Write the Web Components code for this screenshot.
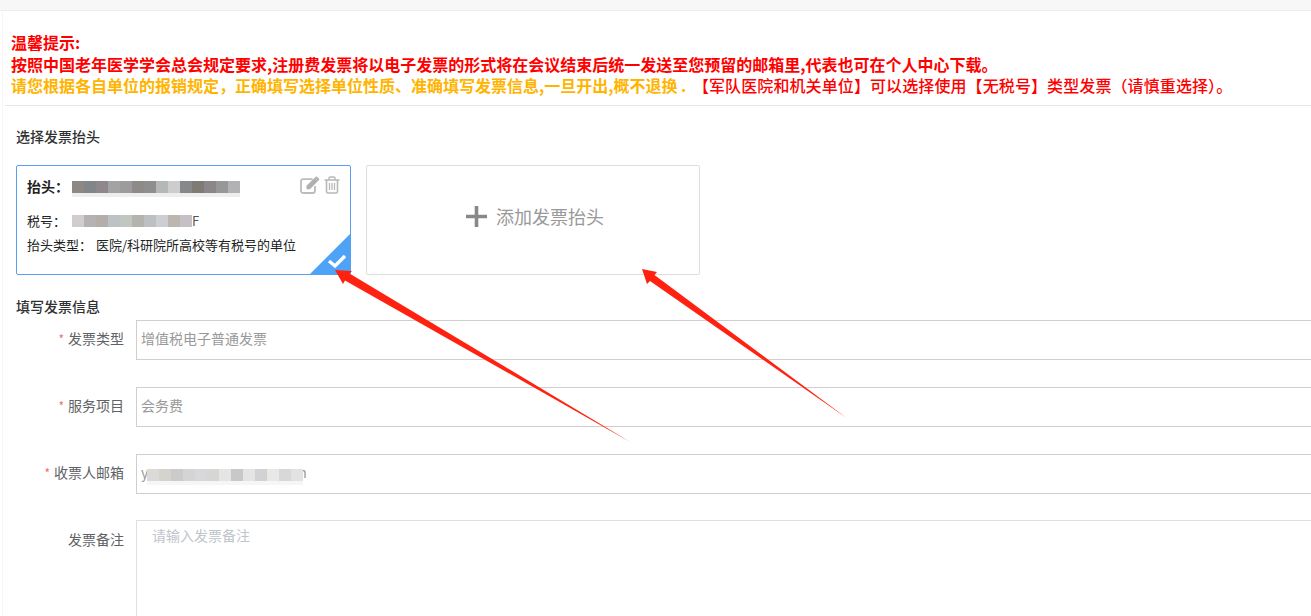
<!DOCTYPE html>
<html lang="zh">
<head>
<meta charset="utf-8">
<title>发票信息</title>
<style>
  html, body { margin: 0; padding: 0; height: 616px; overflow: hidden; background: #fff; }
  body { font-family: "Noto Sans CJK SC", "Liberation Sans", sans-serif; color: #333; position: relative; }
</style>
</head>
<body>
<top-bar></top-bar>
<page-body>
  <tip-notice>
    <div>温馨提示:</div>
    <div>按照中国老年医学学会总会规定要求,注册费发票将以电子发票的形式将在会议结束后统一发送至您预留的邮箱里,代表也可在个人中心下载。</div>
    <div><span class="warn">请您根据各自单位的报销规定&#xFF0C;正确填写选择单位性质、准确填写发票信息,一旦开出,概不退换 .</span> <span class="plain">【军队医院和机关单位】可以选择使用【无税号】类型发票&#xFF08;请慎重选择&#xFF09;。</span></div>
  </tip-notice>
  <section-title top="20" bottom="19">选择发票抬头</section-title>
  <card-row>
    <invoice-card></invoice-card>
    <add-card>添加发票抬头</add-card>
  </card-row>
  <section-title top="21" bottom="4">填写发票信息</section-title>
  <form-field label="发票类型" required>增值税电子普通发票</form-field>
  <form-field label="服务项目" required>会务费</form-field>
  <form-field label="收票人邮箱" required class="mail">
    <span style="display:inline-flex;align-items:center">y<blur-mosaic style="margin:10px 0 0 -1px;position:relative;z-index:1" colors="#dcdad8,#d5d3cd,#cbcbcb,#d4d4d6,#d8d8da,#d6d6d4,#e4e6e6,#c8c8ca,#e4e4e2,#d2d2d4,#e8e8e6,#d8d8d8,#e2e2e2" fade="#f6f6f6"></blur-mosaic><span style="margin-left:-5px">n</span></span>
  </form-field>
  <note-field label="发票备注" placeholder="请输入发票备注"></note-field>
</page-body>
<arrow-overlay></arrow-overlay>

<script>
class TopBar extends HTMLElement {
    constructor() {
        super();
        this.attachShadow({mode: "open"}).innerHTML = `
            <style>
                :host {
                    display: block;
                    height: 10px;
                    background: #f7f7f7;
                    border-bottom: 1px solid #eeeeee;
                }
            </style>`;
    }
}
customElements.define("top-bar", TopBar);

class PageBody extends HTMLElement {
    constructor() {
        super();
        this.attachShadow({mode: "open"}).innerHTML = `
            <style>
                :host {
                    display: block;
                    margin-left: 2px;
                    border-left: 1px solid #f6f6f6;
                }
            </style>
            <slot></slot>`;
    }
}
customElements.define("page-body", PageBody);

class TipNotice extends HTMLElement {
    constructor() {
        super();
        this.attachShadow({mode: "open"}).innerHTML = `
            <style>
                :host {
                    display: block;
                    margin-left: 2px;
                    padding: 21px 0 8px 6px;
                    border-bottom: 1px solid #e6e6e6;
                    font-size: 16px;
                    line-height: 21.5px;
                    font-weight: 700;
                    color: #ff0000;
                    white-space: nowrap;
                }
                ::slotted(div) { height: 21.5px; }
            </style>
            <slot></slot>`;
        const warn = this.querySelector(".warn");
        const plain = this.querySelector(".plain");
        if (warn) warn.style.color = "#ffb400";
        if (plain) {
            plain.style.fontWeight = "500";
            plain.style.marginLeft = "3px";
            plain.style.letterSpacing = "0.1px";
        }
    }
}
customElements.define("tip-notice", TipNotice);

class SectionTitle extends HTMLElement {
    constructor() {
        super();
        this.attachShadow({mode: "open"}).innerHTML = `
            <style>
                :host {
                    display: block;
                    margin-left: 13px;
                    font-size: 14px;
                    line-height: 20px;
                    font-weight: 500;
                    color: #303133;
                }
            </style>
            <slot></slot>`;
    }
    connectedCallback() {
        this.style.marginTop = this.getAttribute("top") + "px";
        this.style.marginBottom = this.getAttribute("bottom") + "px";
    }
}
customElements.define("section-title", SectionTitle);

class CardRow extends HTMLElement {
    constructor() {
        super();
        this.attachShadow({mode: "open"}).innerHTML = `
            <style>
                :host {
                    display: flex;
                    gap: 15px;
                    margin-left: 13px;
                }
            </style>
            <slot></slot>`;
    }
}
customElements.define("card-row", CardRow);

class BlurMosaic extends HTMLElement {
    constructor() {
        super();
        this.attachShadow({mode: "open"});
    }
    connectedCallback() {
        const colors = this.getAttribute("colors").split(",");
        const fade = this.getAttribute("fade");
        const cells = colors.map(c => `<i style="background:${c}"></i>`).join("");
        this.shadowRoot.innerHTML = `
            <style>
                :host { display: inline-block; vertical-align: middle; }
                .row { display: flex; height: 12px; }
                .row i { display: block; width: 12px; }
                .fade { height: 4px; }
            </style>
            <div class="row">${cells}</div>
            <div class="fade" style="background:${fade}"></div>`;
    }
}
customElements.define("blur-mosaic", BlurMosaic);

class InvoiceCard extends HTMLElement {
    constructor() {
        super();
        this.attachShadow({mode: "open"}).innerHTML = `
            <style>
                :host {
                    display: block;
                    position: relative;
                    box-sizing: border-box;
                    width: 335px;
                    height: 110px;
                    padding: 10px 10px 0;
                    border: 1px solid #5a9ff0;
                    border-radius: 2px;
                    overflow: hidden;
                    color: #222;
                }
                .head {
                    display: flex;
                    align-items: flex-start;
                    height: 24px;
                    font-size: 14px;
                    line-height: 20px;
                    font-weight: 700;
                }
                .head .blur { margin: 5px 0 0 3px; }
                .tools {
                    display: flex;
                    gap: 4px;
                    margin-left: auto;
                }
                .tools svg { display: block; }
                .line {
                    display: flex;
                    align-items: center;
                    font-size: 13px;
                    line-height: 20px;
                    height: 20px;
                }
                .tax { margin-top: 11px; }
                .type { margin-top: 4px; }
                .type span { margin-left: 4px; }
                .tax blur-mosaic { margin: 4px 0 0 6px; }
                .tax .end { color: #555; }
                .corner {
                    position: absolute;
                    right: 0;
                    bottom: 0;
                    display: block;
                }
            </style>
            <div class="head">
                <span>抬头&#xFF1A;</span>
                <blur-mosaic class="blur" colors="#8d8884,#838688,#8f878c,#a3a3a3,#9c9c9e,#8e8a88,#8e8e8c,#b4b8b8,#cdcdcd,#87888a,#7e7a74,#8b868a,#979798,#b2b2b4" fade="#eeeeee"></blur-mosaic>
                <div class="tools">
                    <svg width="20" height="18" viewBox="0 0 20 18" fill="none">
                        <path d="M12.5 3.200H3.200A2.200 2.200 0 0 0 1 5.400v9.400A2.200 2.200 0 0 0 3.200 17h9.600a2.200 2.200 0 0 0 2.200-2.200V10" stroke="#bcbcbc" stroke-width="1.800"/>
                        <path d="M6.500 9.800 14.600 1.700l3.400 3.400-8.100 8.100H6.500z" fill="#b0b0b0"/>
                        <path d="M15.600 0.800a1 1 0 0 1 1.400 0l2 2a1 1 0 0 1 0 1.400l-.9.900-3.400-3.400z" fill="#b0b0b0"/>
                    </svg>
                    <svg width="16" height="18" viewBox="0 0 16 18" fill="none" stroke="#b8b8b8">
                        <path d="M0.500 4h15" stroke-width="1.600"/>
                        <path d="M5 4V2.200A1.200 1.200 0 0 1 6.200 1h3.600A1.200 1.200 0 0 1 11 2.200V4" stroke-width="1.500"/>
                        <path d="M2.500 4v11.500A1.600 1.600 0 0 0 4.100 17h7.800a1.600 1.600 0 0 0 1.600-1.600V4" stroke-width="1.600"/>
                        <path d="M5.500 7v7M8 7v7M10.500 7v7" stroke-width="1.300"/>
                    </svg>
                </div>
            </div>
            <div class="line tax">
                <span>税号&#xFF1A;</span>
                <blur-mosaic colors="#d0cdcc,#b5b2b4,#b4aeab,#bcc3c2,#c2c6c0,#b5b3ae,#bcc0c2,#cdced2,#bcb5b0,#c4c0c4" fade="#ffffff"></blur-mosaic>
                <span class="end">F</span>
            </div>
            <div class="line type">抬头类型&#xFF1A;<span>医院/科研院所高校等有税号的单位</span></div>
            <svg class="corner" width="40" height="40" viewBox="0 0 40 40">
                <path d="M40 0V40H0z" fill="#4fa3f7"/>
                <path d="M19 27l6 5 10-10" fill="none" stroke="#fff" stroke-width="3.400"/>
            </svg>`;
    }
}
customElements.define("invoice-card", InvoiceCard);

class AddCard extends HTMLElement {
    constructor() {
        super();
        this.attachShadow({mode: "open"}).innerHTML = `
            <style>
                :host {
                    display: flex;
                    align-items: center;
                    justify-content: center;
                    gap: 9px;
                    box-sizing: border-box;
                    width: 334px;
                    height: 110px;
                    padding: 0 0 7px 4px;
                    border: 1px solid #dedede;
                    border-radius: 2px;
                    font-size: 18px;
                    color: #999;
                }
                svg { display: block; }
            </style>
            <svg width="21" height="21" viewBox="0 0 21 21">
                <path d="M0 8.700h21v3.600H0zM8.700 0h3.600v21H8.700z" fill="#888"/>
            </svg>
            <slot></slot>`;
    }
}
customElements.define("add-card", AddCard);

class FormField extends HTMLElement {
    constructor() {
        super();
        this.attachShadow({mode: "open"}).innerHTML = `
            <style>
                :host {
                    display: flex;
                    align-items: flex-start;
                    height: 40px;
                    margin-bottom: 27px;
                    font-size: 14px;
                }
                .label {
                    box-sizing: border-box;
                    flex: 0 0 133px;
                    padding-right: 12px;
                    line-height: 36px;
                    text-align: right;
                    color: #606266;
                    white-space: nowrap;
                }
                .star { color: #f56c6c; margin-right: 4px; font-size: 12px; }
                .box {
                    box-sizing: border-box;
                    flex: 1;
                    height: 40px;
                    margin-right: -4px;
                    padding-left: 4px;
                    border: 1px solid #cfcfcf;
                    line-height: 34px;
                    color: #999;
                    white-space: nowrap;
                }
            </style>
            <div class="label"><span class="star"></span><span class="text"></span></div>
            <div class="box"><slot></slot></div>`;
    }
    connectedCallback() {
        this.shadowRoot.querySelector(".text").textContent = this.getAttribute("label");
        const star = this.shadowRoot.querySelector(".star");
        if (this.hasAttribute("required")) star.textContent = "*";
    }
}
customElements.define("form-field", FormField);

class NoteField extends HTMLElement {
    constructor() {
        super();
        this.attachShadow({mode: "open"}).innerHTML = `
            <style>
                :host {
                    display: flex;
                    align-items: flex-start;
                    margin-top: -1px;
                    font-size: 14px;
                }
                .label {
                    box-sizing: border-box;
                    flex: 0 0 133px;
                    padding-right: 12px;
                    line-height: 38px;
                    text-align: right;
                    color: #606266;
                }
                .box {
                    box-sizing: border-box;
                    flex: 1;
                    height: 98px;
                    margin-right: -4px;
                    padding: 3px 15px;
                    border: 1px solid #dcdfe6;
                    line-height: 22px;
                    color: #c0c4cc;
                }
            </style>
            <div class="label"></div>
            <div class="box"></div>`;
    }
    connectedCallback() {
        this.shadowRoot.querySelector(".label").textContent = this.getAttribute("label");
        this.shadowRoot.querySelector(".box").textContent = this.getAttribute("placeholder");
    }
}
customElements.define("note-field", NoteField);

// the two hand drawn red arrows that lie over the form
class ArrowOverlay extends HTMLElement {
    constructor() {
        super();
        this.attachShadow({mode: "open"}).innerHTML = `
            <style>
                :host {
                    display: block;
                    position: absolute;
                    left: 0;
                    top: 0;
                    pointer-events: none;
                }
                svg { display: block; }
            </style>
            <svg width="1311" height="616" viewBox="0 0 1311 616">
                <defs>
                    <linearGradient id="a1" gradientUnits="userSpaceOnUse" x1="336" y1="270" x2="632" y2="443">
                        <stop offset="0.97" stop-color="#ff2211"/>
                        <stop offset="1" stop-color="#ff2211" stop-opacity="0.2"/>
                    </linearGradient>
                    <linearGradient id="a2" gradientUnits="userSpaceOnUse" x1="642" y1="269" x2="848" y2="419">
                        <stop offset="0.97" stop-color="#ff2211"/>
                        <stop offset="1" stop-color="#ff2211" stop-opacity="0.2"/>
                    </linearGradient>
                </defs>
                <path d="M335 270 352 271 349.500 273.500 632 443 345 280.500 343 284z" fill="url(#a1)"/>
                <path d="M642 269 657 272 654.500 275 848 419 650 281 647 284z" fill="url(#a2)"/>
            </svg>`;
    }
}
customElements.define("arrow-overlay", ArrowOverlay);
</script>
</body>
</html>
